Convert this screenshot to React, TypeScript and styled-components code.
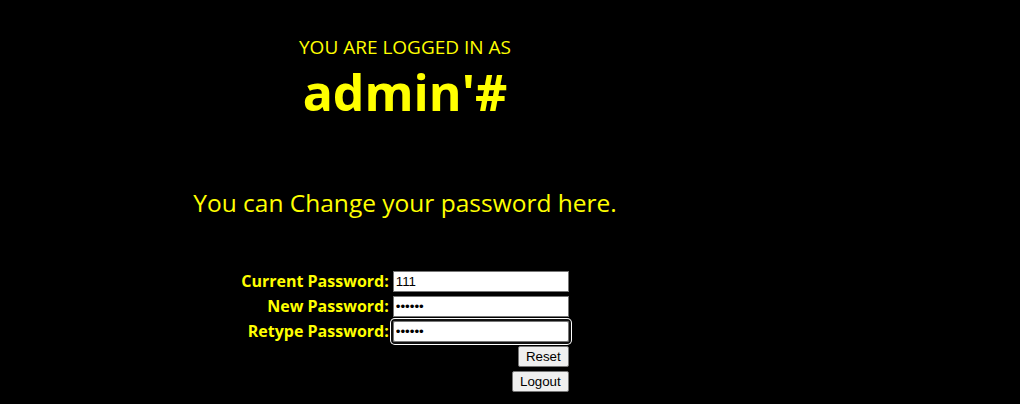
import React from "react";
import styled, { createGlobalStyle } from "styled-components";

const Global = createGlobalStyle`
  html, body { background: #000; }
  body { margin: 8px; font-family: "Open Sans", "Noto Sans", sans-serif; color: #ffff00; }
`;

const Page = styled.div`
  width: 794px;
  display: flex;
  flex-direction: column;
  align-items: center;
  text-align: center;
`;

const Kicker = styled.div`
  margin-top: 27px;
  font-size: 19px;
  line-height: 24px;
`;

const UserName = styled.div`
  margin-top: 4px;
  font-size: 50px;
  font-weight: 700;
  line-height: 58px;
`;

const Lead = styled.div`
  margin-top: 66px;
  font-size: 24.5px;
  line-height: 32px;
`;

const Form = styled.form`
  margin-top: 52px;
  display: grid;
  grid-template-columns: auto 176px;
  column-gap: 4px;
  row-gap: 4px;
  align-items: center;
`;

const Label = styled.label`
  font-size: 16px;
  font-weight: 700;
  text-align: right;
  line-height: 21px;
`;

const Input = styled.input<{ $focused?: boolean }>`
  box-sizing: border-box;
  width: 176px;
  height: 21px;
  margin: 0;
  padding: 1px 2px;
  font-family: Arial, "Liberation Sans", sans-serif;
  font-size: 13.33px;
  color: #000;
  background: #fff;
  border: 1px solid #767676;
  border-radius: ${(p) => (p.$focused ? "2px" : "0")};
  outline: ${(p) => (p.$focused ? "2px solid #101010" : "none")};
  outline-offset: 0;
  box-shadow: ${(p) => (p.$focused ? "0 0 0 3px #fff" : "none")};
`;

const Actions = styled.div`
  grid-column: 2;
  display: flex;
  flex-direction: column;
  align-items: flex-end;
  gap: 4px;
`;

const Button = styled.button`
  box-sizing: border-box;
  height: 21px;
  padding: 0 7px;
  margin: 0;
  font-family: Arial, "Liberation Sans", sans-serif;
  font-size: 13.33px;
  color: #000;
  background: #efefef;
  border: 1px solid #767676;
  border-radius: 2px;
`;

export default function App() {
  return (
    <>
      <Global />
      <Page>
        <Kicker>YOU ARE LOGGED IN AS</Kicker>
        <UserName>admin'#</UserName>
        <Lead>You can Change your password here.</Lead>
        <Form onSubmit={(e) => e.preventDefault()}>
          <Label>Current Password:</Label>
          <Input type="text" defaultValue="111" />
          <Label>New Password:</Label>
          <Input type="password" defaultValue="222222" />
          <Label>Retype Password:</Label>
          <Input type="password" defaultValue="222222" $focused />
          <Actions>
            <Button type="reset">Reset</Button>
            <Button type="button">Logout</Button>
          </Actions>
        </Form>
      </Page>
    </>
  );
}
